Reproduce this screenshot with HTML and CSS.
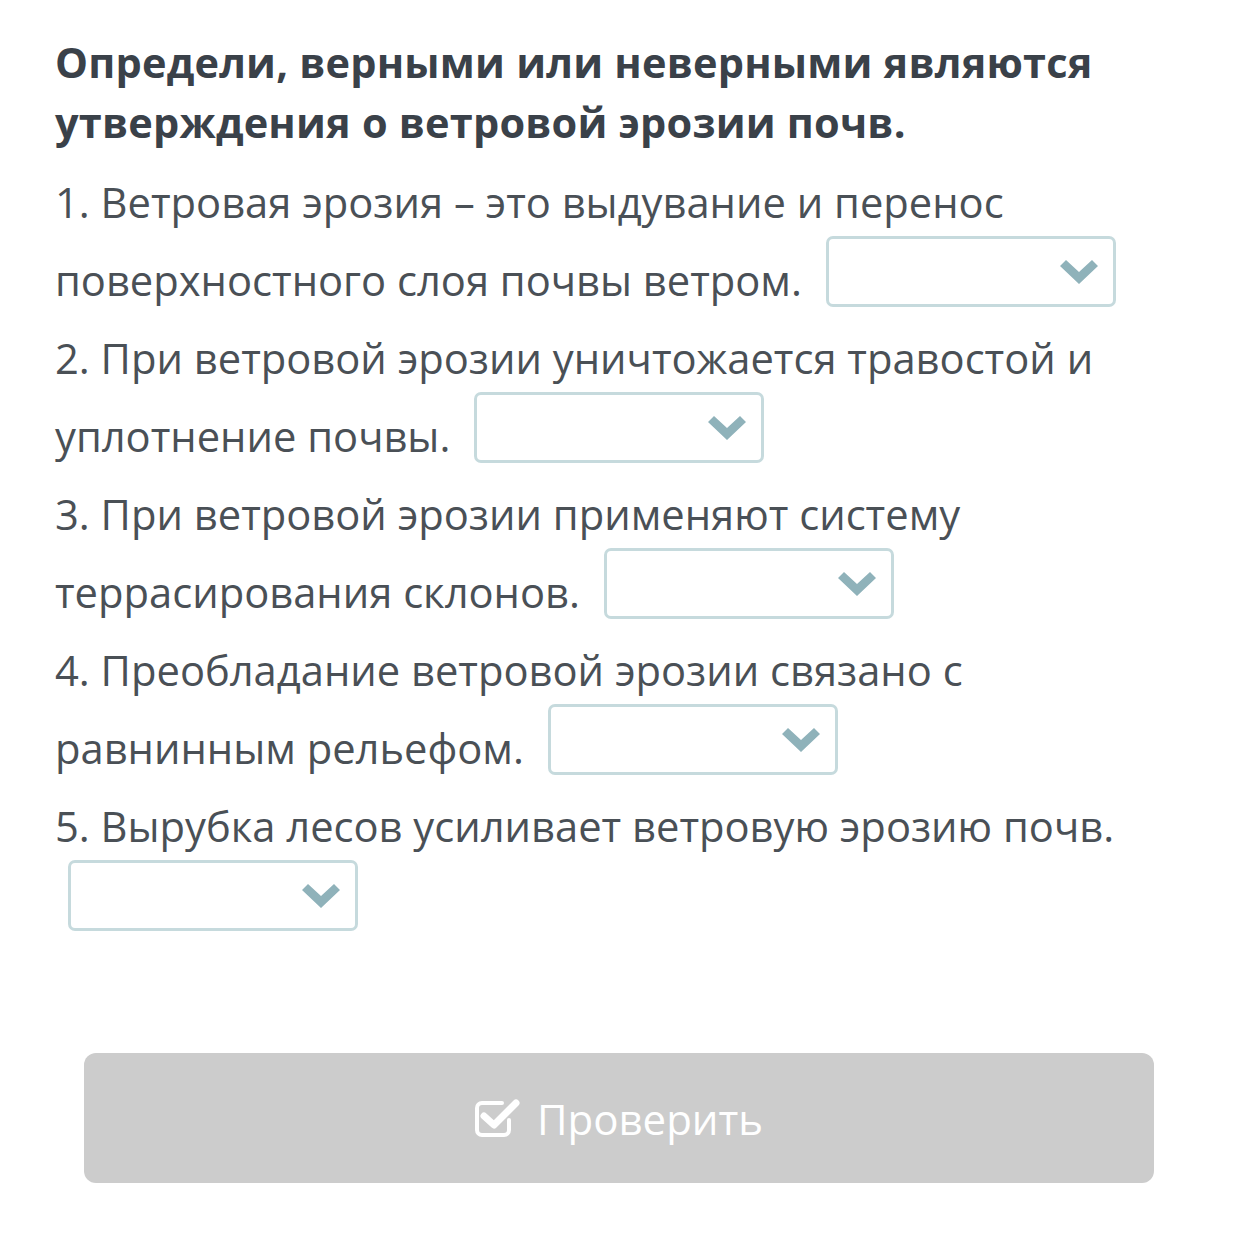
FILE: index.html
```html
<!DOCTYPE html>
<html lang="ru">
<head>
<meta charset="utf-8">
<link rel="stylesheet" href="styles.css">
</head>
<body>
<main class="page">
  <h1 class="title">Определи, верными или неверными являются утверждения о ветровой эрозии почв.</h1>
  <div class="items">
    <p class="item">1. Ветровая эрозия – это выдувание и перенос поверхностного слоя почвы ветром. <span class="select"><span class="select-inner"><svg class="chev" viewBox="0 0 38 24"><polygon points="0,6 6,0 19,12 32,0 38,6 19,24" /></svg></span></span></p>
    <p class="item">2. При ветровой эрозии уничтожается травостой и уплотнение почвы. <span class="select"><span class="select-inner"><svg class="chev" viewBox="0 0 38 24"><polygon points="0,6 6,0 19,12 32,0 38,6 19,24" /></svg></span></span></p>
    <p class="item">3. При ветровой эрозии применяют систему террасирования склонов. <span class="select"><span class="select-inner"><svg class="chev" viewBox="0 0 38 24"><polygon points="0,6 6,0 19,12 32,0 38,6 19,24" /></svg></span></span></p>
    <p class="item">4. Преобладание ветровой эрозии связано с равнинным рельефом. <span class="select"><span class="select-inner"><svg class="chev" viewBox="0 0 38 24"><polygon points="0,6 6,0 19,12 32,0 38,6 19,24" /></svg></span></span></p>
    <p class="item">5. Вырубка лесов усиливает ветровую эрозию почв. <span class="select"><span class="select-inner"><svg class="chev" viewBox="0 0 38 24"><polygon points="0,6 6,0 19,12 32,0 38,6 19,24" /></svg></span></span></p>
  </div>
  <div class="actions">
    <button class="check-btn" type="button">
      <svg class="check-icon" viewBox="0 0 46 40"><path class="box" d="M34 22 V32 a5 5 0 0 1 -5 5 H7 a5 5 0 0 1 -5 -5 V10 a5 5 0 0 1 5 -5 H27" /><path class="tick" d="M9 18 L19 27 L41 5" /></svg>
      <span>Проверить</span>
    </button>
  </div>
</main>
</body>
</html>
```
FILE: styles.css
```css
* { box-sizing: border-box; }
html, body { margin: 0; padding: 0; background: #ffffff; }
body { font-family: "Open Sans", "Noto Sans", sans-serif; }
.page { padding: 32px 60px 0 55px; width: 1238px; }
.title {
  margin: 0;
  font-size: 41.5px;
  font-weight: 700;
  line-height: 60px;
  color: #3a4149;
  letter-spacing: 0.2px;
}
.items { margin-top: 11px; }
.item {
  margin: 0;
  font-size: 41.7px;
  line-height: 78px;
  color: #4a5056;
}
.select {
  display: inline-block;
  overflow: hidden;
  vertical-align: -11px;
  width: 290px;
  height: 71px;
  margin-left: 13px;
  margin-top: -12px;
  border: 3px solid #c6dadd;
  border-radius: 7px;
  background: #fff;
}
.select-inner {
  display: flex;
  height: 100%;
  align-items: center;
  justify-content: flex-end;
  padding-right: 15px;
}
.chev { width: 38px; height: 24px; display: block; }
.chev polygon { fill: #8fb2ba; }
.actions { padding: 110px 44px 0 29px; }
.check-btn {
  display: flex;
  align-items: center;
  justify-content: center;
  gap: 16px;
  width: 1070px;
  height: 130px;
  border: none;
  border-radius: 12px;
  background: #cccccc;
  color: #ffffff;
  font-family: "Open Sans", "Noto Sans", sans-serif;
  font-size: 42px;
  padding: 0;
}
.check-icon { width: 46px; height: 40px; display: block; }
.check-icon path { fill: none; stroke: #fff; stroke-linecap: round; stroke-linejoin: round; }
.check-icon .box { stroke-width: 4; }
.check-icon .tick { stroke-width: 7; }
```
